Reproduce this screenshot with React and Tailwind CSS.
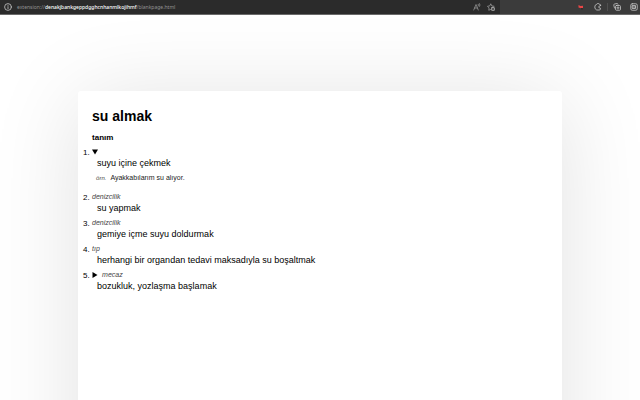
import React from "react";

const definitions = [
  { text: "suyu içine çekmek", example: "Ayakkabılarım su alıyor.", open: true },
  { label: "denizcilik", text: "su yapmak" },
  { label: "denizcilik", text: "gemiye içme suyu doldurmak" },
  { label: "tıp", text: "herhangi bir organdan tedavi maksadıyla su boşaltmak" },
  { label: "mecaz", text: "bozukluk, yozlaşma başlamak", collapsed: true },
];

function Icon({ children, className = "size-2" }) {
  return (
    <svg
      viewBox="0 0 16 16"
      className={className}
      fill="none"
      stroke="currentColor"
      strokeWidth="1.6"
      strokeLinecap="round"
      strokeLinejoin="round"
      aria-hidden="true"
    >
      {children}
    </svg>
  );
}

function BrowserBar() {
  return (
    <header className="flex h-[15px] shrink-0 items-stretch border-b border-[#6a6a6a] bg-[#3b3b3b] text-[#c8c8c8]">
      <div className="flex min-w-0 flex-[500] items-center bg-[#2b2b2b] pl-1 pr-[5px]">
        <button aria-label="Site bilgileri" className="flex">
          <Icon>
            <circle cx="8" cy="8" r="6.8" />
            <path d="M8 7.3v4M8 4.6v.2" />
          </Icon>
        </button>
        <div
          role="textbox"
          aria-label="Adres"
          aria-readonly="true"
          tabIndex={0}
          className="ml-[5px] flex-1 whitespace-nowrap font-['Noto_Sans',sans-serif] text-[5px] leading-[8px] text-[#929292]"
        >
          extension://<span className="font-medium text-white">denakjbankgeppdgghcnhanmlkojihmf</span>/blankpage.html
        </div>
        <div className="flex items-center gap-[6px] text-[#a8a8a8]">
          <button aria-label="Sesli oku" className="flex">
            <Icon>
              <path d="M1.5 14 6 3l4.500 11M3.200 10h5.600M10.500 2.500q1.500 1.500 0 3.500M13 1q2.500 3 0 6" strokeWidth="1.300" />
            </Icon>
          </button>
          <button aria-label="Sık kullanılanlara ekle" className="flex">
            <Icon>
              <path d="M7 13 3.500 14.500l.7-4.500L1 6.500l4.500-.7L7.500 1.500l2 4.300 4.500.7" strokeWidth="1.400" />
              <rect x="9" y="9" width="6" height="6" rx="1" />
              <path d="M12 9V7.800M12 11v2" />
            </Icon>
          </button>
        </div>
      </div>
      <div className="flex flex-[140] items-center justify-end pr-[2px]">
        <button aria-label="Uzantı" className="mr-[9px] flex">
          <svg viewBox="0 0 8 8" className="size-2" aria-hidden="true">
            <path d="M1.500 2 3.500 3l2.500-.3v3L4 5.200l-2.500-.7z" fill="#e84646" />
            <path d="M4 5.200h2v1H4z" fill="#222222" />
          </svg>
        </button>
        <button aria-label="Uzantılar" className="mr-[5px] flex">
          <Icon>
            <path d="M13 5V4q0-1.500-1.500-1.500h-1Q10 1 8 1T5.500 2.500Q1.500 3.500 1.500 8t4 6h5Q13 13.500 13 12v-1.500Q9.500 10.500 9.500 8T13 5Z" />
          </Icon>
        </button>
        <span className="mr-[5px] h-2 w-px bg-[#505050]" />
        <button aria-label="Koleksiyonlar" className="mr-[9px] flex">
          <Icon>
            <path d="M3 10 1.500 4Q1.300 2.500 3 2l5-1q1.500-.2 2 1.500" />
            <rect x="5" y="5" width="10" height="9.500" rx="2" />
            <path d="M10 7.500v4.500M7.700 9.700h4.600" />
          </Icon>
        </button>
        <button aria-label="Profil" className="flex">
          <Icon>
            <rect x="1.500" y="1.500" width="13" height="13" rx="3" />
            <path d="M5 5h6v6H5zM5 8h6" />
          </Icon>
        </button>
      </div>
    </header>
  );
}

function Label({ children }) {
  return <em className="text-[7px] text-[#444444]">{children}</em>;
}

function Definition({ item }) {
  const meaning = <p className="pl-[5px] text-[9px] leading-[12px]">{item.text}</p>;

  if (item.open) {
    return (
      <details open className="group mb-1">
        <summary className="flex h-[10px] list-none items-center">
          <svg viewBox="0 0 6 6" className="size-[6px] -rotate-90 group-open:rotate-0" aria-hidden="true">
            <path d="M0 .5h6L3 5.500z" />
          </svg>
        </summary>
        {meaning}
        <p className="mt-[3px] flex items-baseline gap-1 pl-1 text-[7px] leading-[12px] text-[#222222]">
          <em className="text-[6px] text-[#444444]">örn.</em>
          {item.example}
        </p>
      </details>
    );
  }

  if (item.collapsed) {
    return (
      <details className="group">
        <summary className="list-none">
          <span className="flex h-[10px] items-center gap-1">
            <svg viewBox="0 0 6 6" className="size-[6px] group-open:rotate-90" aria-hidden="true">
              <path d="M.5 0v6l5-3z" />
            </svg>
            <Label>{item.label}</Label>
          </span>
          {meaning}
        </summary>
      </details>
    );
  }

  return (
    <div>
      <div className="h-[10px] leading-[10px]">
        <Label>{item.label}</Label>
      </div>
      {meaning}
    </div>
  );
}

export default function App() {
  return (
    <div className="flex h-screen flex-col overflow-hidden bg-white font-['Liberation_Sans',Arial,sans-serif] text-black">
      <BrowserBar />
      <main className="flex min-h-0 flex-1 justify-center overflow-hidden pt-[76px]">
        <article className="h-[200vh] w-[75.6%] rounded-[3px] bg-white px-[14px] pt-4 shadow-[0_8px_90px_rgba(0,0,0,0.12)]">
          <h1 className="text-[14px] font-bold leading-[18px]">su almak</h1>
          <h2 className="mt-[7px] text-[8px] font-bold leading-[12px]">tanım</h2>
          <ol className="mt-[3px] flex flex-col gap-1 text-[8px] leading-[10px]">
            {definitions.map((item, index) => (
              <li key={item.text} className="-ml-[9px] flex gap-[2px]">
                <span className="w-[7px] leading-[12px]">{index + 1}.</span>
                <Definition item={item} />
              </li>
            ))}
          </ol>
        </article>
      </main>
    </div>
  );
}
